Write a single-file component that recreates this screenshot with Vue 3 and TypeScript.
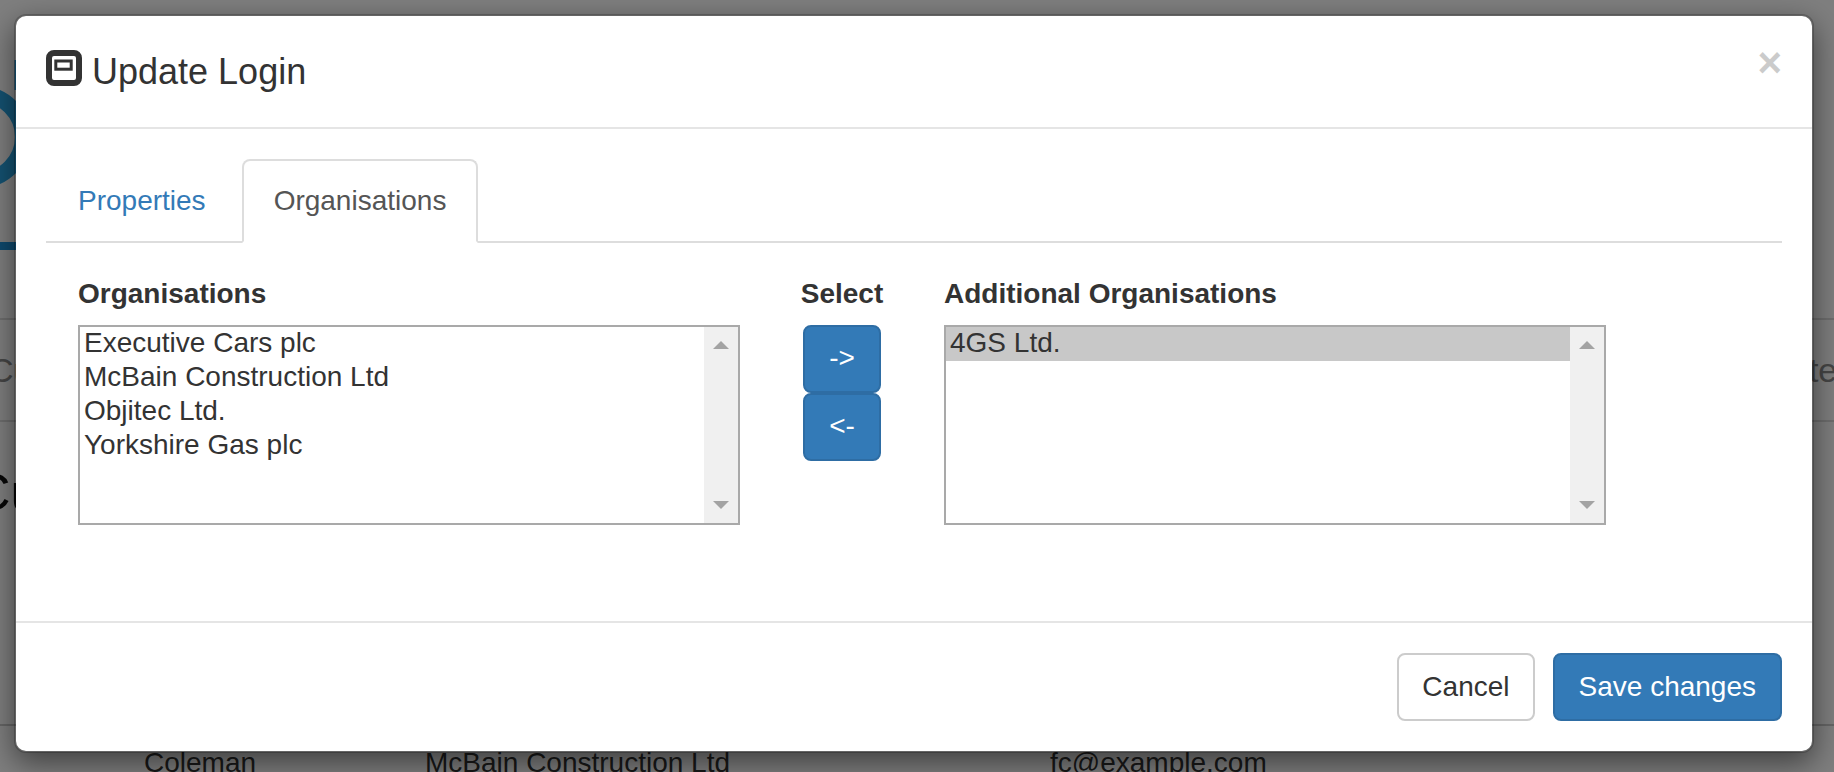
<script setup lang="ts">
const available: string[] = ['Executive Cars plc', 'McBain Construction Ltd', 'Objitec Ltd.', 'Yorkshire Gas plc']
const additional: string[] = ['4GS Ltd.']
</script>

<template>
  <div class="screen">
    <div class="page">
      <svg class="logo" width="40" height="190" viewBox="0 60 40 190" aria-hidden="true">
        <circle cx="-20" cy="137" r="43" fill="none" stroke="#28a4e4" stroke-width="16" />
        <rect x="14.5" y="60" width="3" height="30" fill="#28a4e4" />
        <rect x="0" y="242" width="40" height="8" fill="#1e94dc" />
      </svg>
      <div class="nav-row">
        <span class="nav-left">Customers</span>
        <span class="nav-right">Filter</span>
      </div>
      <h1 class="page-title">Customers</h1>
      <div class="table-row">
        <span class="cell-name">Coleman</span>
        <span class="cell-org">McBain Construction Ltd</span>
        <span class="cell-mail">fc@example.com</span>
      </div>
    </div>

    <div class="overlay">
      <div class="modal">
        <header class="modal-header">
          <button class="close" type="button">×</button>
          <h4 class="modal-title">
            <svg class="title-icon" width="36" height="36" viewBox="0 0 36 36" aria-hidden="true">
              <rect x="3" y="3" width="30" height="30" rx="5" fill="#fff" stroke="#333" stroke-width="6" />
              <rect x="9.8" y="11" width="15.4" height="8.2" fill="#fff" stroke="#333" stroke-width="3" />
            </svg>
            <span>Update Login</span>
          </h4>
        </header>

        <section class="modal-body">
          <ul class="tabs">
            <li class="tab"><a>Properties</a></li>
            <li class="tab active"><a>Organisations</a></li>
          </ul>
          <div class="picker">
            <div class="list-col">
              <label class="field-label">Organisations</label>
              <div class="listbox">
                <ul class="options">
                  <li v-for="item in available" :key="item" class="option">{{ item }}</li>
                </ul>
                <div class="scroll"><i class="arrow up"></i><i class="arrow down"></i></div>
              </div>
            </div>
            <div class="mid-col">
              <label class="field-label">Select</label>
              <button class="btn primary move" type="button">-&gt;</button>
              <button class="btn primary move" type="button">&lt;-</button>
            </div>
            <div class="list-col">
              <label class="field-label">Additional Organisations</label>
              <div class="listbox">
                <ul class="options">
                  <li v-for="item in additional" :key="item" class="option selected">{{ item }}</li>
                </ul>
                <div class="scroll"><i class="arrow up"></i><i class="arrow down"></i></div>
              </div>
            </div>
          </div>
        </section>

        <footer class="modal-footer">
          <button class="btn plain" type="button">Cancel</button>
          <button class="btn primary" type="button">Save changes</button>
        </footer>
      </div>
    </div>
  </div>
</template>

<style>
html,
body {
  margin: 0;
  padding: 0;
  background: #fff;
}
</style>

<style scoped>
* {
  box-sizing: border-box;
}
.screen {
  position: relative;
  width: 1834px;
  height: 772px;
  overflow: hidden;
  font-family: "Liberation Sans", Arial, sans-serif;
  font-size: 28px;
  line-height: 40px;
  color: #333;
  background: #fff;
}
.page {
  display: flex;
  flex-direction: column;
  height: 772px;
  padding-top: 60px;
}
.logo {
  display: block;
  flex: none;
}
.nav-row {
  flex: none;
  display: flex;
  justify-content: space-between;
  align-items: center;
  height: 104px;
  margin-top: 68px;
  border-top: 2px solid #ddd;
  border-bottom: 2px solid #ddd;
  font-size: 34px;
  color: #8c8c8c;
}
.nav-left {
  margin-left: -11px;
  width: 200px;
}
.nav-right {
  width: 61px;
  white-space: nowrap;
}
.page-title {
  flex: none;
  height: 304px;
  margin: 0 0 0 -27px;
  padding-top: 42px;
  border-bottom: 2px solid #ccc;
  font-size: 52px;
  font-weight: 500;
  line-height: 56px;
  color: #111;
}
.table-row {
  flex: none;
  display: flex;
  padding-top: 17px;
  padding-left: 144px;
  color: #333;
}
.cell-name {
  width: 281px;
}
.cell-org {
  width: 625px;
}
.overlay {
  position: absolute;
  inset: 0;
  padding: 14px 20px 0 14px;
  background: rgba(0, 0, 0, 0.5);
}
.modal {
  width: 1800px;
  border: 2px solid rgba(0, 0, 0, 0.2);
  border-radius: 12px;
  background: #fff;
  background-clip: padding-box;
  box-shadow: 0 10px 30px rgba(0, 0, 0, 0.5);
}
.modal-header {
  padding: 30px;
  border-bottom: 2px solid #e5e5e5;
}
.close {
  float: right;
  margin-top: -4px;
  padding: 0;
  border: 0;
  background: transparent;
  font-family: inherit;
  font-size: 42px;
  font-weight: 700;
  line-height: 42px;
  color: #000;
  opacity: 0.2;
}
.modal-title {
  display: flex;
  align-items: center;
  gap: 10px;
  margin: 0;
  font-size: 36px;
  font-weight: 500;
  line-height: 51.4px;
}
.title-icon {
  flex: none;
  margin-bottom: 7px;
}
.modal-body {
  padding: 30px 30px 96.4px;
}
.tabs {
  display: flex;
  gap: 4px;
  margin: 0;
  padding: 0;
  list-style: none;
  border-bottom: 2px solid #ddd;
}
.tab {
  margin-bottom: -2px;
}
.tab a {
  display: block;
  padding: 20px 30px;
  border: 2px solid transparent;
  border-radius: 8px 8px 0 0;
  color: #337ab7;
}
.tab.active a {
  border-color: #ddd #ddd #fff;
  background: #fff;
  color: #555;
}
.picker {
  display: flex;
  gap: 61px;
  padding: 31px 0 0 32px;
}
.list-col {
  width: 662px;
}
.mid-col {
  display: flex;
  flex: none;
  width: 82px;
  flex-direction: column;
  align-items: center;
  white-space: nowrap;
}
.field-label {
  display: block;
  margin-bottom: 10.6px;
  font-weight: 700;
}
.listbox {
  display: flex;
  height: 200px;
  border: 2px solid #a9a9a9;
  background: #fff;
  line-height: 32px;
}
.options {
  flex: 1;
  margin: 0;
  padding: 0;
  list-style: none;
}
.option {
  height: 33.9px;
  padding: 0 4px;
}
.option.selected {
  background: #c8c8c8;
}
.scroll {
  position: relative;
  flex: none;
  width: 34px;
  background: #f0f0f0;
}
.arrow {
  position: absolute;
  left: 9px;
  border-left: 8px solid transparent;
  border-right: 8px solid transparent;
}
.arrow.up {
  top: 14px;
  border-bottom: 8px solid #a3a3a3;
}
.arrow.down {
  bottom: 14px;
  border-top: 8px solid #a3a3a3;
}
.btn {
  padding: 12px 24px;
  border: 2px solid #ccc;
  border-radius: 8px;
  background: #fff;
  font-family: inherit;
  font-size: 28px;
  line-height: 40px;
  color: #333;
}
.btn.plain {
  padding: 12px 23.5px;
}
.btn.primary {
  border-color: #2e6da4;
  background: #337ab7;
  color: #fff;
}
.btn.move {
  display: block;
  padding: 11px 24px 13px;
}
.modal-footer {
  display: flex;
  justify-content: flex-end;
  gap: 17.5px;
  padding: 30px;
  border-top: 2px solid #e5e5e5;
}
</style>
